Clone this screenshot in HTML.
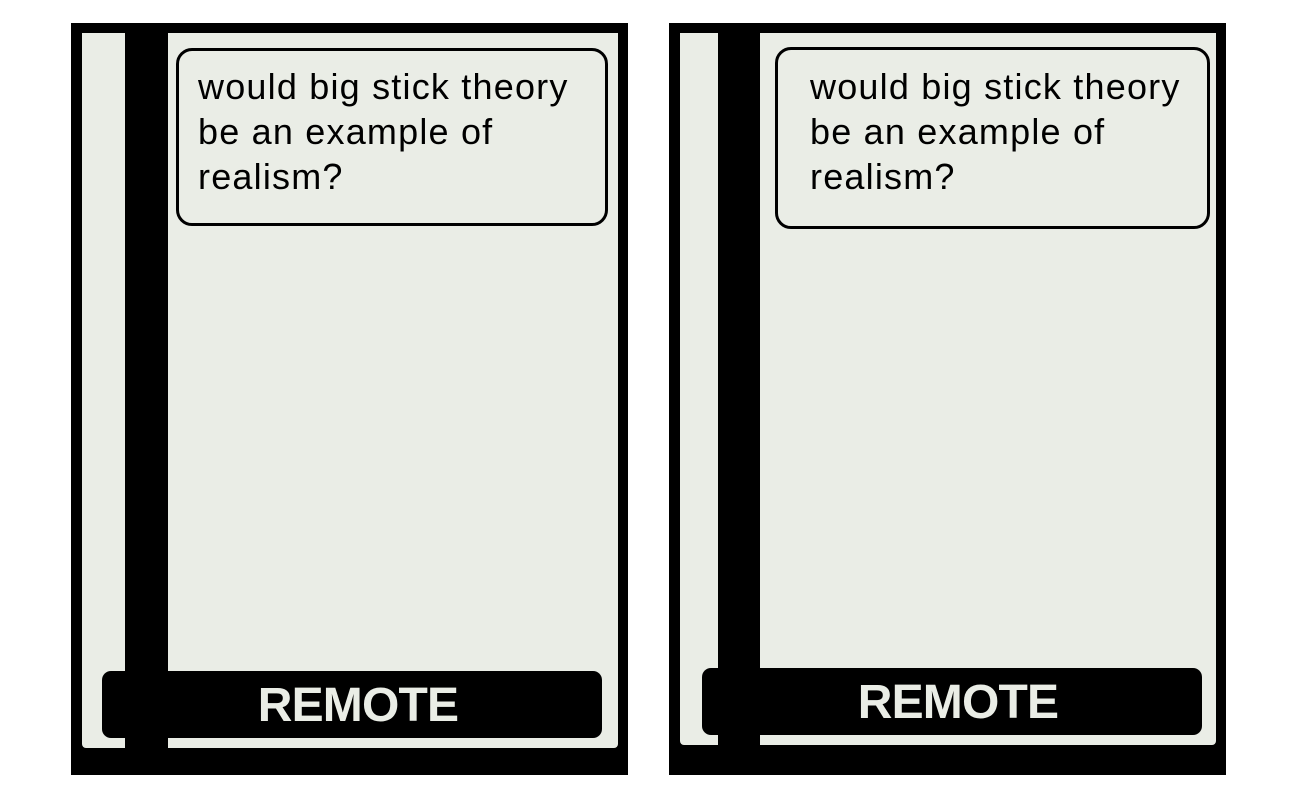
<!DOCTYPE html>
<html><head><style>
body{margin:0;width:1300px;height:800px;background:#fff;position:relative;overflow:hidden}
div{position:absolute;box-sizing:border-box}
.outer{background:#000}
.inner{background:#eaede6}
.bar{background:#000}
.bub{border:3px solid #000;border-radius:16px;background:#eaede6}
.txt{font-family:"Liberation Sans",sans-serif;font-size:36px;line-height:45px;color:#000;white-space:nowrap;letter-spacing:1.2px}
.lab{background:#000;border-radius:9px;color:#eaede6;font-family:"Liberation Sans",sans-serif;font-weight:bold;font-size:48px;text-align:center;line-height:70px;letter-spacing:-0.8px}
</style></head><body>
<div class="outer" style="left:71px;top:23px;width:557px;height:752px"></div>
<div class="inner" style="left:82px;top:33px;width:536px;height:715px;border-radius:0 0 4px 4px"></div>
<div class="bar" style="left:125px;top:33px;width:43px;height:715px"></div>
<div class="bub" style="left:176px;top:48px;width:432px;height:178px"></div>
<div class="txt" style="left:198px;top:64px">would big stick theory<br>be an example of<br>realism?</div>
<div class="lab" style="left:102px;top:671px;width:500px;height:67px;padding-left:12px">REMOTE</div>

<div class="outer" style="left:669px;top:23px;width:557px;height:752px"></div>
<div class="inner" style="left:680px;top:33px;width:536px;height:712px;border-radius:0 0 4px 4px"></div>
<div class="bar" style="left:718px;top:33px;width:42px;height:712px"></div>
<div class="bub" style="left:775px;top:47px;width:435px;height:182px"></div>
<div class="txt" style="left:810px;top:64px">would big stick theory<br>be an example of<br>realism?</div>
<div class="lab" style="left:702px;top:668px;width:500px;height:67px;padding-left:12px">REMOTE</div>
</body></html>
